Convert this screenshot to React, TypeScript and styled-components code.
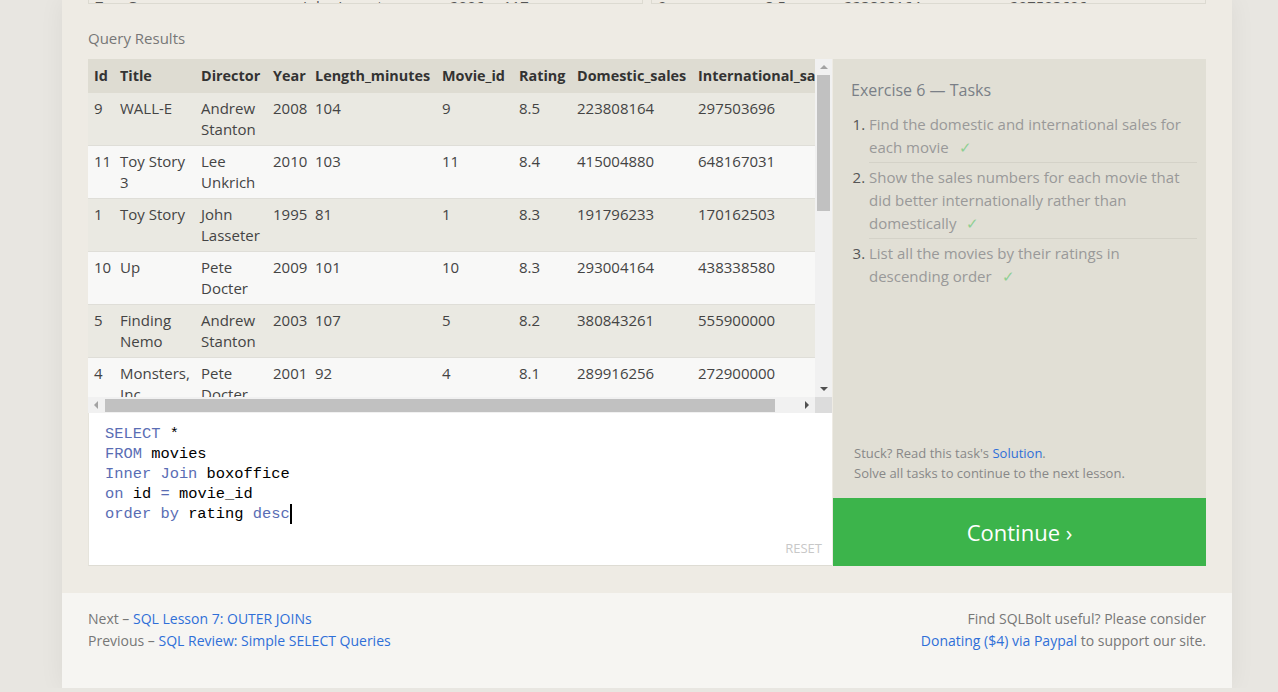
import styled, { createGlobalStyle } from "styled-components";

const GlobalStyle = createGlobalStyle`
  html, body {
    margin: 0;
    padding: 0;
  }
  body {
    background: #e8e6e1;
    font-family: "Open Sans", "Noto Sans", sans-serif;
    color: #444;
  }
`;

const Page = styled.div`
  width: 1170px;
  margin-left: 62px;
  background: #eeebe4;
  box-shadow: 0 0 24px rgba(0, 0, 0, 0.06);
`;

const Main = styled.div`
  padding: 0 26px 27px;
`;

/* bottom edge of the example tables scrolled above */
const PrevTables = styled.div`
  display: grid;
  grid-template-columns: 555px 555px;
  column-gap: 8px;
`;

const PrevRow = styled.div<{ $cols: string }>`
  display: grid;
  grid-template-columns: ${(p) => p.$cols};
  height: 3px;
  overflow: hidden;
  border: 1px solid #dcdad1;
  border-top: none;
  font-size: 15px;
  line-height: 21px;
  color: #555;
`;

const PrevCell = styled.span`
  padding-left: 6px;
  margin-top: -4px;
  white-space: nowrap;
`;

const SectionTitle = styled.h3`
  margin: 24px 0 10px;
  font-size: 15px;
  line-height: 21px;
  font-weight: 400;
  color: #777;
`;

const Workspace = styled.div`
  display: grid;
  grid-template-columns: 744px 373px;
  column-gap: 1px;
`;

const LeftCol = styled.div`
  display: flex;
  flex-direction: column;
`;

const ResultsView = styled.div`
  display: grid;
  grid-template-columns: 727px 17px;
  grid-template-rows: 338px 16px;
`;

const TableViewport = styled.div`
  overflow: hidden;
  background: #f8f8f7;
`;

const Table = styled.table<{ $w: number }>`
  border-collapse: collapse;
  table-layout: fixed;
  width: ${(p) => p.$w}px;
  font-size: 15px;
  line-height: 21px;
`;

const HeadCell = styled.th<{ $w: number }>`
  width: ${(p) => p.$w}px;
  box-sizing: border-box;
  padding: 6px 0 7px 6px;
  text-align: left;
  font-size: 14.4px;
  font-weight: 700;
  color: #333;
  background: #dedcd2;
  white-space: nowrap;
  overflow: hidden;
`;

const Row = styled.tr<{ $odd: boolean }>`
  background: ${(p) => (p.$odd ? "#eae9e2" : "#f8f8f7")};
  border-bottom: 1px solid #dfded8;
`;

const Cell = styled.td`
  padding: 5px 3px 5px 6px;
  vertical-align: top;
  color: #444;
`;

const VScroll = styled.div`
  display: flex;
  flex-direction: column;
  align-items: center;
  background: #f1f1f1;
`;

const HScroll = styled.div`
  display: flex;
  align-items: center;
  background: #f1f1f1;
`;

const ArrowBox = styled.div`
  flex: none;
  width: 16px;
  height: 16px;
  display: flex;
  align-items: center;
  justify-content: center;
`;

const Arrow = styled.span<{ $dir: "up" | "down" | "left" | "right" }>`
  width: 0;
  height: 0;
  border: 4px solid transparent;
  ${(p) =>
    p.$dir === "up"
      ? "border-bottom-color: #a3a3a3; border-top-width: 0;"
      : p.$dir === "down"
        ? "border-top-color: #505050; border-bottom-width: 0;"
        : p.$dir === "left"
          ? "border-right-color: #a3a3a3; border-left-width: 0;"
          : "border-left-color: #505050; border-right-width: 0;"}
`;

const VThumb = styled.div`
  width: 13px;
  height: 136px;
  background: #c1c1c1;
`;

const HThumb = styled.div`
  height: 13px;
  width: 670px;
  margin-left: 1px;
  background: #c1c1c1;
`;

const Spacer = styled.div`
  flex: 1;
`;

const Corner = styled.div`
  background: #dcdcdc;
`;

const Editor = styled.div`
  height: 153px;
  box-sizing: border-box;
  display: flex;
  flex-direction: column;
  background: #fff;
  padding: 11px 10px 8px 16px;
  border-left: 1px solid #e6e4dc;
  border-bottom: 1px solid #dedcd4;
`;

const CodeLine = styled.div`
  font-family: "Liberation Mono", "DejaVu Sans Mono", monospace;
  font-size: 15.4px;
  line-height: 20px;
  color: #000;
  white-space: pre;
`;

const Kw = styled.span`
  color: #5a6db4;
`;

const Caret = styled.span`
  display: inline-block;
  width: 2px;
  height: 20px;
  background: #000;
  vertical-align: top;
`;

const ResetLink = styled.div`
  margin-top: auto;
  align-self: flex-end;
  font-size: 13px;
  line-height: 18px;
  color: #c8c8c8;
`;

const RightCol = styled.div`
  display: flex;
  flex-direction: column;
`;

const TasksPanel = styled.div`
  height: 439px;
  box-sizing: border-box;
  display: flex;
  flex-direction: column;
  background: #e1dfd5;
  padding: 19px 9px 15px 18px;
`;

const TasksTitle = styled.div`
  font-size: 16px;
  line-height: 24px;
  color: #7a7f87;
`;

const TaskList = styled.ol`
  margin: 11px 0 0;
  padding: 0 0 0 18px;
  font-size: 15px;
  line-height: 23px;
  color: #555;
`;

const TaskItem = styled.li<{ $last?: boolean }>`
  padding: 3px 0 ${(p) => (p.$last ? "0" : "3px")};
  border-bottom: ${(p) => (p.$last ? "none" : "1px solid #d4d2c8")};
  &:first-child {
    padding-top: 0;
  }
`;

const TaskText = styled.span`
  color: #999;
`;

const Check = styled.span`
  margin-left: 10px;
  color: #8fcf93;
`;

const Hint = styled.div`
  margin-top: auto;
  padding-left: 3px;
  font-size: 13px;
  line-height: 20px;
  color: #888;
`;

const Link = styled.a`
  color: #2f6fd8;
  text-decoration: none;
`;

const ContinueButton = styled.div`
  height: 68px;
  display: flex;
  align-items: center;
  justify-content: center;
  background: #3cb44b;
  color: #fff;
  font-size: 22px;
`;

const Footer = styled.div`
  height: 95px;
  box-sizing: border-box;
  display: flex;
  justify-content: space-between;
  padding: 15px 26px 0;
  background: #f6f5f2;
  font-size: 14px;
  line-height: 22px;
  color: #777;
`;

const FooterRight = styled.div`
  text-align: right;
`;

const columns = [
  { name: "Id", w: 26 },
  { name: "Title", w: 81 },
  { name: "Director", w: 72 },
  { name: "Year", w: 42 },
  { name: "Length_minutes", w: 127 },
  { name: "Movie_id", w: 77 },
  { name: "Rating", w: 58 },
  { name: "Domestic_sales", w: 121 },
  { name: "International_sales", w: 150 },
];

const tableWidth = columns.reduce((sum, c) => sum + c.w, 0);

const rows = [
  ["9", "WALL-E", "Andrew Stanton", "2008", "104", "9", "8.5", "223808164", "297503696"],
  ["11", "Toy Story 3", "Lee Unkrich", "2010", "103", "11", "8.4", "415004880", "648167031"],
  ["1", "Toy Story", "John Lasseter", "1995", "81", "1", "8.3", "191796233", "170162503"],
  ["10", "Up", "Pete Docter", "2009", "101", "10", "8.3", "293004164", "438338580"],
  ["5", "Finding Nemo", "Andrew Stanton", "2003", "107", "5", "8.2", "380843261", "555900000"],
  ["4", "Monsters, Inc.", "Pete Docter", "2001", "92", "4", "8.1", "289916256", "272900000"],
  ["7", "Cars", "John Lasseter", "2006", "117", "7", "7.2", "244082982", "217900167"],
];

export default function App() {
  return (
    <>
      <GlobalStyle />
      <Page>
        <Main>
          <PrevTables>
            <PrevRow $cols="32px 176px 147px 53px 1fr">
              <PrevCell>7</PrevCell>
              <PrevCell>Cars</PrevCell>
              <PrevCell>John Lasseter</PrevCell>
              <PrevCell>2006</PrevCell>
              <PrevCell>117</PrevCell>
            </PrevRow>
            <PrevRow $cols="107px 79px 166px 1fr">
              <PrevCell>9</PrevCell>
              <PrevCell>8.5</PrevCell>
              <PrevCell>223808164</PrevCell>
              <PrevCell>297503696</PrevCell>
            </PrevRow>
          </PrevTables>

          <SectionTitle>Query Results</SectionTitle>

          <Workspace>
            <LeftCol>
              <ResultsView>
                <TableViewport>
                  <Table $w={tableWidth}>
                    <thead>
                      <tr>
                        {columns.map((c) => (
                          <HeadCell key={c.name} $w={c.w}>
                            {c.name}
                          </HeadCell>
                        ))}
                      </tr>
                    </thead>
                    <tbody>
                      {rows.map((r, i) => (
                        <Row key={r[0]} $odd={i % 2 === 0}>
                          {r.map((v, j) => (
                            <Cell key={j}>{v}</Cell>
                          ))}
                        </Row>
                      ))}
                    </tbody>
                  </Table>
                </TableViewport>
                <VScroll>
                  <ArrowBox>
                    <Arrow $dir="up" />
                  </ArrowBox>
                  <VThumb />
                  <Spacer />
                  <ArrowBox>
                    <Arrow $dir="down" />
                  </ArrowBox>
                </VScroll>
                <HScroll>
                  <ArrowBox>
                    <Arrow $dir="left" />
                  </ArrowBox>
                  <HThumb />
                  <Spacer />
                  <ArrowBox>
                    <Arrow $dir="right" />
                  </ArrowBox>
                </HScroll>
                <Corner />
              </ResultsView>

              <Editor>
                <CodeLine>
                  <Kw>SELECT</Kw> *
                </CodeLine>
                <CodeLine>
                  <Kw>FROM</Kw> movies
                </CodeLine>
                <CodeLine>
                  <Kw>Inner Join</Kw> boxoffice
                </CodeLine>
                <CodeLine>
                  <Kw>on</Kw> id <Kw>=</Kw> movie_id
                </CodeLine>
                <CodeLine>
                  <Kw>order by</Kw> rating <Kw>desc</Kw>
                  <Caret />
                </CodeLine>
                <ResetLink>RESET</ResetLink>
              </Editor>
            </LeftCol>

            <RightCol>
              <TasksPanel>
                <TasksTitle>Exercise 6 — Tasks</TasksTitle>
                <TaskList>
                  <TaskItem>
                    <TaskText>Find the domestic and international sales for each movie</TaskText>
                    <Check>✓</Check>
                  </TaskItem>
                  <TaskItem>
                    <TaskText>
                      Show the sales numbers for each movie that did better internationally rather than
                      domestically
                    </TaskText>
                    <Check>✓</Check>
                  </TaskItem>
                  <TaskItem $last>
                    <TaskText>List all the movies by their ratings in descending order</TaskText>
                    <Check>✓</Check>
                  </TaskItem>
                </TaskList>
                <Hint>
                  Stuck? Read this task's <Link href="#">Solution</Link>.
                  <br />
                  Solve all tasks to continue to the next lesson.
                </Hint>
              </TasksPanel>
              <ContinueButton>Continue ›</ContinueButton>
            </RightCol>
          </Workspace>
        </Main>

        <Footer>
          <div>
            Next – <Link href="#">SQL Lesson 7: OUTER JOINs</Link>
            <br />
            Previous – <Link href="#">SQL Review: Simple SELECT Queries</Link>
          </div>
          <FooterRight>
            Find SQLBolt useful? Please consider
            <br />
            <Link href="#">Donating ($4) via Paypal</Link> to support our site.
          </FooterRight>
        </Footer>
      </Page>
    </>
  );
}
